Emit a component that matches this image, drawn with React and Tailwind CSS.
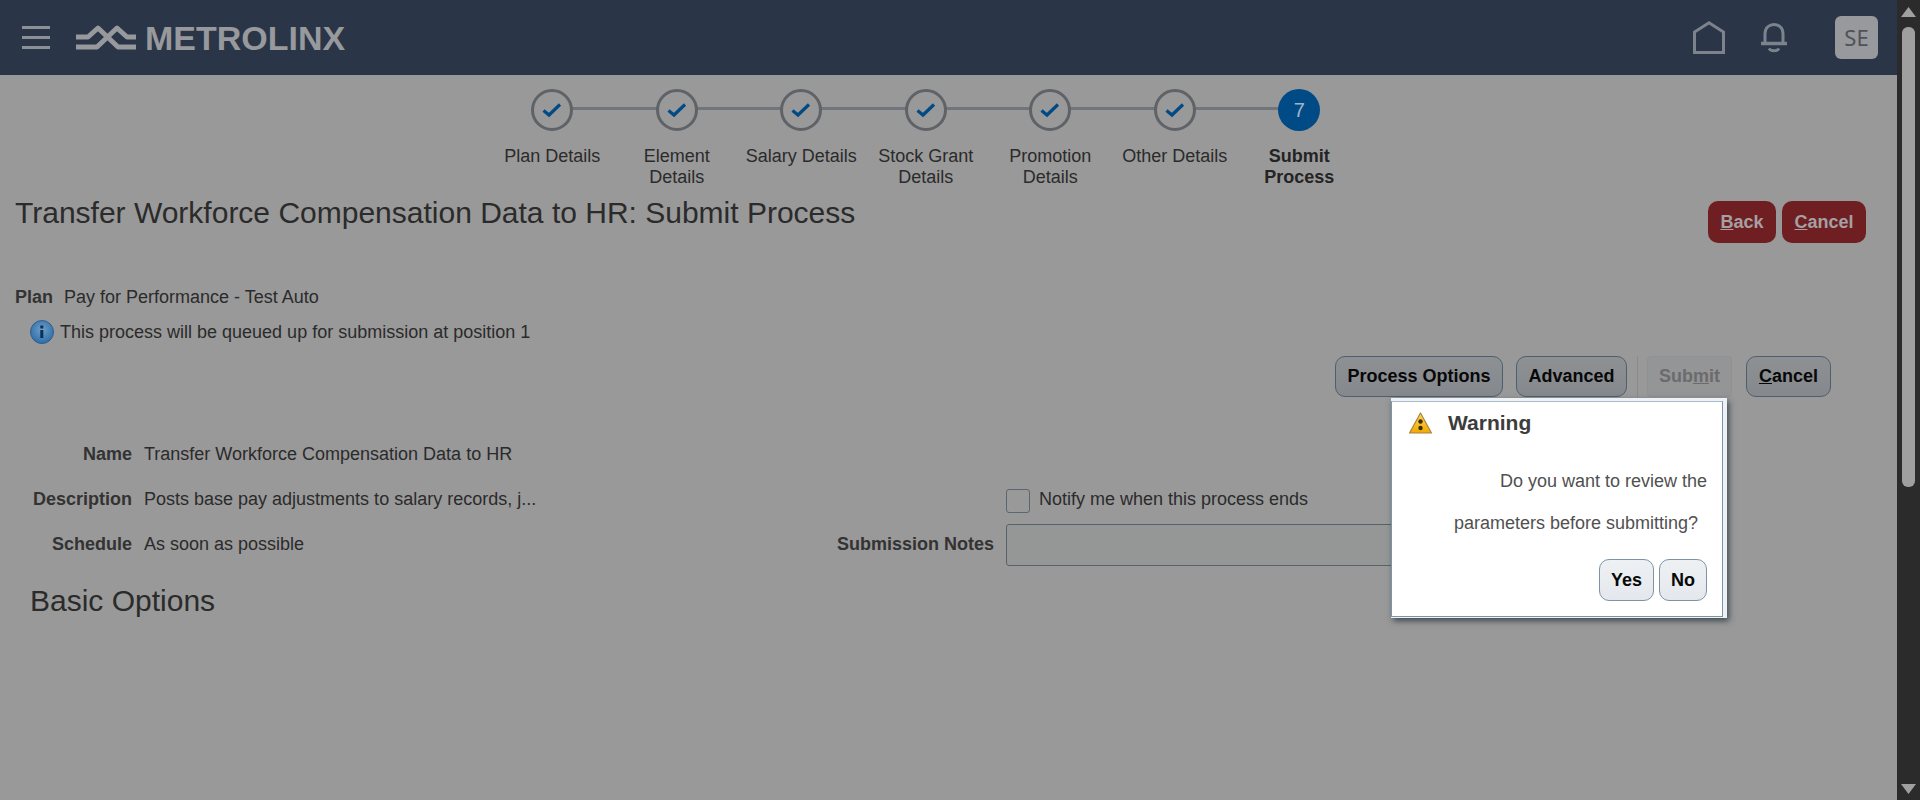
import React from "react";

const steps = [
  ["Plan Details"], ["Element", "Details"], ["Salary Details"], ["Stock Grant", "Details"],
  ["Promotion", "Details"], ["Other Details"],
];

function Check() {
  return (
    <svg width="20" height="16" viewBox="0 0 20 16" fill="none">
      <path d="M1.5 8.5 L7 13 L18 2.5" stroke="#004a85" strokeWidth="3.2" />
    </svg>
  );
}

function Step({ lines, done, first, last, bold, num }) {
  return (
    <div className="w-[124.5px] shrink-0 flex flex-col items-center relative">
      <div className="relative w-full h-[42px] flex justify-center">
        {!first && <div className="absolute left-0 right-1/2 top-[18px] h-[3px] bg-[#70747b]" />}
        {!last && <div className="absolute left-1/2 right-0 top-[18px] h-[3px] bg-[#70747b]" />}
        {done ? (
          <div className="relative w-[42px] h-[42px] rounded-full border-[3px] border-[#5f6368] bg-[#999999] flex items-center justify-center">
            <Check />
          </div>
        ) : (
          <div className="relative w-[42px] h-[42px] rounded-full bg-[#004a85] flex items-center justify-center text-[20px] text-[#a3b4c4]">
            {num}
          </div>
        )}
      </div>
      <div className={`mt-[15px] text-center text-[18px] leading-[21px] whitespace-nowrap ${bold ? "font-bold text-[#242424]" : "text-[#2b2b2b]"}`}>
        {lines.map((l) => (
          <div key={l}>{l}</div>
        ))}
      </div>
    </div>
  );
}

function RedBtn({ u, rest }) {
  return (
    <div className="h-[42px] px-[12.5px] flex items-center rounded-[10px] bg-[#6f1f22] text-[#a5a0a3] font-bold text-[18px]">
      <span className="underline">{u}</span>
      {rest}
    </div>
  );
}

function GrayBtn({ children, className = "" }) {
  return (
    <div className={`h-[41px] flex items-center justify-center rounded-[10px] border border-[#4e5f6e] bg-gradient-to-b from-[#8e9194] to-[#85888c] text-[#080808] font-bold text-[18px] whitespace-nowrap ${className}`}>
      {children}
    </div>
  );
}

function Row({ label, value, children }) {
  return (
    <div className="flex items-center h-[45px] text-[18px] text-[#2b2b2b]">
      <div className="w-[837px] shrink-0 flex items-center">
        <div className="w-[132px] text-right font-bold text-[#333333]">{label}</div>
        <div className="ml-[12px] whitespace-nowrap">{value}</div>
      </div>
      {children}
    </div>
  );
}

export default function App() {
  return (
    <div
      className="relative flex w-[1920px] h-[800px] overflow-hidden bg-[#999999]"
      style={{ fontFamily: '"Liberation Sans", Arial, sans-serif' }}
    >
      <div className="flex-1 min-w-0 flex flex-col">
        <header className="h-[75px] shrink-0 bg-[#2a3547] flex items-center pl-[22px] pr-[19px]">
          <div className="w-[28px] flex flex-col gap-[7px]">
            <div className="h-[3px] bg-[#8b9097]" />
            <div className="h-[3px] bg-[#8b9097]" />
            <div className="h-[3px] bg-[#8b9097]" />
          </div>
          <svg className="ml-[26px]" width="60" height="26" viewBox="0 0 60 26" fill="none" stroke="#97999c" strokeWidth="5" strokeLinejoin="round">
            <path d="M0 12 H12 L22 3 L42 22 H60" />
            <path d="M0 22 H21 L41 3 L51 12 H60" />
          </svg>
          <div className="ml-[9px] text-[#97999c] font-bold text-[34px] leading-none whitespace-nowrap">
            METROLINX
          </div>
          <div className="flex-1" />
          <svg width="32" height="33" viewBox="0 0 32 33" fill="none" stroke="#7d838c" strokeWidth="3">
            <path d="M1.5 31.5 V11 L16 1.8 L30.5 11 V31.5 Z" />
          </svg>
          <svg className="ml-[36px]" width="26" height="30" viewBox="0 0 26 30" fill="none" stroke="#7d838c" strokeWidth="3">
            <path d="M0 20.5 H26" strokeWidth="3.5" />
            <path d="M4 20 V10.5 C4 4.5 8.5 1.5 13 1.5 C17.5 1.5 22 4.5 22 10.5 V20" />
            <path d="M8 25.5 C10 28.5 16 28.5 18 25.5" />
          </svg>
          <div className="ml-[48px] w-[43px] h-[43px] rounded-[6px] bg-[#97999c] flex items-center justify-center text-[#4f5257] text-[22px]" style={{ fontFamily: '"Noto Sans", sans-serif' }}>
            SE
          </div>
        </header>

        <main className="flex-1">
          <div className="pl-[490px] pt-[14px] flex">
            {steps.map((s, i) => (
              <Step key={i} lines={s} done first={i === 0} />
            ))}
            <Step lines={["Submit", "Process"]} num="7" last bold />
          </div>

          <div className="flex items-start justify-between pl-[15px] pr-[31px] mt-[7px]">
            <h1 className="text-[30px] leading-[36px] text-[#2b2b2b]">
              Transfer Workforce Compensation Data to HR: Submit Process
            </h1>
            <div className="flex gap-[6px] mt-[6px]">
              <RedBtn u="B" rest="ack" />
              <RedBtn u="C" rest="ancel" />
            </div>
          </div>

          <div className="pl-[15px] mt-[42px] flex items-center h-[24px] text-[18px] text-[#2b2b2b]">
            <span className="font-bold text-[#333333]">Plan</span>
            <span className="ml-[11px]">Pay for Performance - Test Auto</span>
          </div>
          <div className="pl-[30px] mt-[11px] flex items-center h-[24px] text-[18px] text-[#2b2b2b]">
            <svg width="24" height="24" viewBox="0 0 24 24">
              <defs>
                <radialGradient id="infoFill" cx="0.5" cy="0.4" r="0.6">
                  <stop offset="0" stopColor="#6f9fca" />
                  <stop offset="1" stopColor="#2f6da6" />
                </radialGradient>
              </defs>
              <circle cx="12" cy="12" r="11.5" fill="url(#infoFill)" stroke="#2f5f8d" />
              <rect x="10.3" y="10" width="3" height="8" fill="#0b2f55" />
              <rect x="10.3" y="5.5" width="3" height="3" fill="#0b2f55" />
            </svg>
            <span className="ml-[6px]">This process will be queued up for submission at position 1</span>
          </div>

          <div className="flex justify-end items-center pr-[66px] mt-[12px] h-[41px]">
            <GrayBtn className="w-[168px]">Process Options</GrayBtn>
            <GrayBtn className="ml-[13px] w-[111px]">Advanced</GrayBtn>
            <div className="ml-[10px] w-px h-[41px] bg-[#8a8a8a]" />
            <div className="ml-[9px] w-[85px] h-[41px] flex items-center justify-center rounded-[4px] border border-[#8f9193] bg-[#949597] text-[#6b6b6b] font-bold text-[18px]">
              Sub<span className="underline">m</span>it
            </div>
            <GrayBtn className="ml-[14px] w-[85px]">
              <span className="underline">C</span>ancel
            </GrayBtn>
          </div>

          <div className="mt-[35px]">
            <Row label="Name" value="Transfer Workforce Compensation Data to HR" />
            <Row label="Description" value="Posts base pay adjustments to salary records, j...">
              <div className="ml-[169px] w-[24px] h-[24px] mt-[3px] rounded-[3px] border border-[#5b6670] shrink-0" />
              <span className="ml-[9px] whitespace-nowrap">Notify me when this process ends</span>
            </Row>
            <div className="flex items-center h-[45px] text-[18px] text-[#2b2b2b]">
              <div className="w-[132px] text-right font-bold text-[#333333]">Schedule</div>
              <div className="ml-[12px] w-[693px] whitespace-nowrap">As soon as possible</div>
              <span className="font-bold text-[#333333] whitespace-nowrap">Submission Notes</span>
              <div className="ml-[12px] mt-[1px] w-[500px] h-[42px] rounded-[3px] border border-[#56646a] bg-[#949796]" />
            </div>
          </div>

          <h2 className="pl-[30px] mt-[16px] text-[30px] leading-[36px] text-[#2b2b2b]">Basic Options</h2>
        </main>
      </div>

      <aside className="w-[23px] shrink-0 bg-[#2b2b2b] flex flex-col items-center">
        <svg className="mt-[7px]" width="15" height="10" viewBox="0 0 15 10"><path d="M7.5 0 L15 10 H0 Z" fill="#a0a0a0" /></svg>
        <div className="mt-[10px] w-[13px] h-[460px] rounded-[6px] bg-[#9f9f9f]" />
        <div className="flex-1" />
        <svg className="mb-[6px]" width="15" height="10" viewBox="0 0 15 10"><path d="M0 0 H15 L7.5 10 Z" fill="#a0a0a0" /></svg>
      </aside>

      <div className="absolute left-[1391px] top-[398px] w-[336px] h-[220px] bg-[#eef1f5] pt-[3px] pb-[1px] pr-[4px] shadow-[2px_3px_6px_rgba(30,40,50,0.7)]">
        <div className="h-full bg-white border border-[#7d93a8] border-t-[#a9bac9] flex flex-col">
          <div className="flex items-center pl-[17px] h-[42px] shrink-0">
            <svg width="23" height="22" viewBox="0 0 23 22">
              <defs>
                <linearGradient id="warnFill" x1="0" y1="0" x2="0" y2="1">
                  <stop offset="0" stopColor="#ffd95a" />
                  <stop offset="1" stopColor="#f2a900" />
                </linearGradient>
              </defs>
              <path d="M11.5 1 L22.5 21 H0.5 Z" fill="url(#warnFill)" stroke="#a8843c" strokeWidth="1.2" strokeLinejoin="round" />
              <circle cx="11.5" cy="9.5" r="2.2" fill="#3a2d10" />
              <circle cx="11.5" cy="16" r="2.2" fill="#3a2d10" />
            </svg>
            <span className="ml-[16px] text-[21px] font-bold text-[#3c3c3c]">Warning</span>
          </div>
          <div className="mt-[16px] pr-[15px] text-right text-[18px] leading-[42px] text-[#505050] whitespace-nowrap">
            <div>Do you want to review the</div>
            <div className="pr-[9px]">parameters before submitting?</div>
          </div>
          <div className="flex justify-end gap-[5px] pr-[15px] mt-[15px] text-[18px] font-bold text-[#080808]">
            <div className="w-[55px] h-[42px] flex items-center justify-center rounded-[10px] border border-[#7d93a8] bg-gradient-to-b from-[#eef1f4] to-[#e4e8ec]">Yes</div>
            <div className="w-[48px] h-[42px] flex items-center justify-center rounded-[10px] border border-[#7d93a8] bg-gradient-to-b from-[#eef1f4] to-[#e4e8ec]">No</div>
          </div>
        </div>
      </div>
    </div>
  );
}
